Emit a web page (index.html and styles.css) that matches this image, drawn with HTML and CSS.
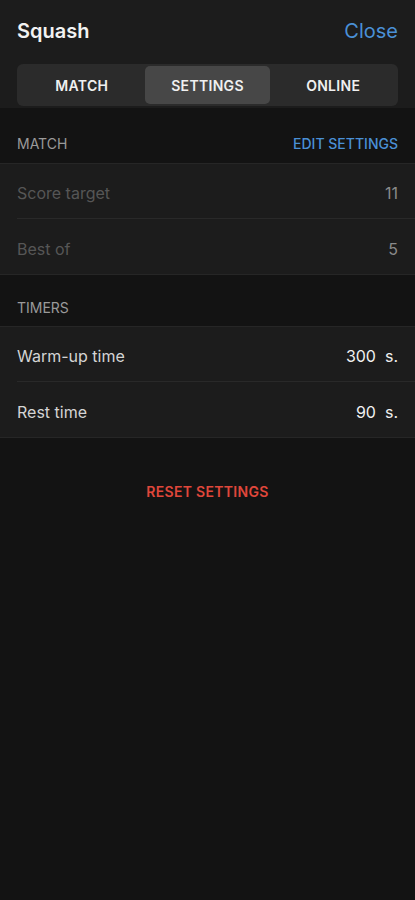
FILE: index.html
```html
<!DOCTYPE html>
<html lang="en">
<head>
  <meta charset="UTF-8" />
  <title>Squash - Settings</title>
  <link rel="stylesheet" href="styles.css">
</head>
<body>
  <div class="top">
    <div class="title-row">
      <h1>Squash</h1>
      <span class="close">Close</span>
    </div>
    <div class="tabs">
      <div class="tab">MATCH</div>
      <div class="tab active">SETTINGS</div>
      <div class="tab">ONLINE</div>
    </div>
  </div>

  <div class="section-head first">
    <span>MATCH</span>
    <span class="link">EDIT SETTINGS</span>
  </div>
  <div class="group disabled">
    <div class="row"><span>Score target</span><span class="value">11</span></div>
    <div class="row"><span>Best of</span><span class="value">5</span></div>
  </div>

  <div class="section-head">
    <span>TIMERS</span>
  </div>
  <div class="group">
    <div class="row"><span>Warm-up time</span><span class="value">300&nbsp; s.</span></div>
    <div class="row"><span>Rest time</span><span class="value">90&nbsp; s.</span></div>
  </div>

  <div class="reset">RESET SETTINGS</div>
</body>
</html>
```

FILE: styles.css
```css
* {
  box-sizing: border-box;
  margin: 0;
  padding: 0;
}

body {
  background: #131313;
  color: #e6e6e6;
  font-family: Inter, "Liberation Sans", Arial, sans-serif;
  min-height: 100vh;
}

.top {
  background: #1c1c1c;
  padding: 16px 17px 2px;
}

.title-row {
  display: flex;
  justify-content: space-between;
  align-items: center;
  height: 30px;
}

h1 {
  font-size: 20px;
  font-weight: 600;
  color: #f2f2f2;
}

.close {
  font-size: 20px;
  color: #4a90d6;
}

.tabs {
  display: flex;
  margin-top: 18px;
  background: #2b2b2b;
  border-radius: 6px;
  padding: 2px;
  height: 42px;
}

.tab {
  flex: 1;
  display: flex;
  align-items: center;
  justify-content: center;
  font-size: 14px;
  font-weight: 600;
  letter-spacing: 0.3px;
  color: #f0f0f0;
  border-radius: 5px;
}

.tab.active {
  background: #474747;
}

.section-head {
  display: flex;
  justify-content: space-between;
  align-items: flex-end;
  padding: 0 17px 10px;
  height: 52px;
  font-size: 14px;
  line-height: 17px;
  color: #9a9a9a;
  border-bottom: 1px solid #262626;
}

.section-head.first {
  height: 56px;
  padding-bottom: 11px;
}

.section-head .link {
  color: #4a90d6;
  font-weight: 500;
}

.group {
  background: #1c1c1c;
  border-bottom: 1px solid #262626;
}

.row {
  display: flex;
  justify-content: space-between;
  align-items: center;
  height: 55px;
  margin-left: 17px;
  padding: 4px 17px 0 0;
  font-size: 16px;
  color: #d4d4d4;
  border-bottom: 1px solid #292929;
}

.row:last-child {
  border-bottom: none;
}

.row .value {
  color: #f0f0f0;
}

.group.disabled .row {
  color: #565656;
}

.group.disabled .value {
  color: #8a8a8a;
}

.reset {
  text-align: center;
  margin-top: 45px;
  font-size: 14px;
  font-weight: 600;
  letter-spacing: 0.3px;
  color: #e0473b;
}
```
